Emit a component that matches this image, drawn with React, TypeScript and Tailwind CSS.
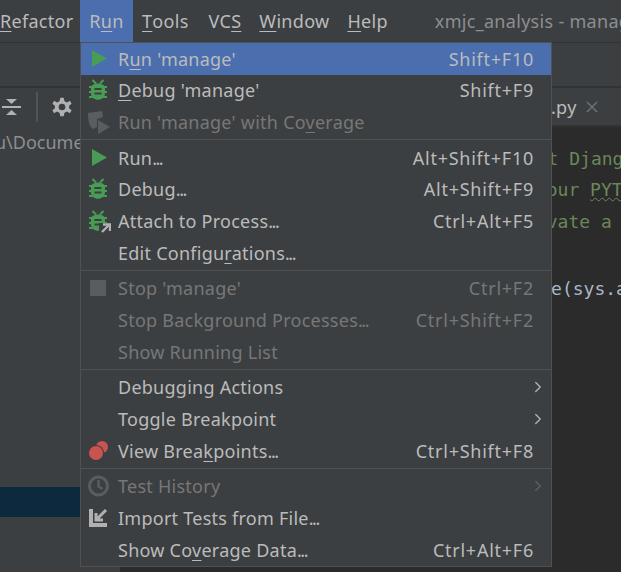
import React from 'react';
import { ChevronRight } from 'lucide-react';

const font = "font-['Noto_Sans','Open_Sans',sans-serif]";
const mono = "font-['DejaVu_Sans_Mono',monospace]";

const RunIcon = () => (
  <svg width="22" height="22" viewBox="0 0 22 22">
    <path d="M5 2 L20 10.5 L5 19 Z" fill="#499c54" />
  </svg>
);

const BugIcon = ({ attach }: { attach?: boolean }) => (
  <svg width="24" height="24" viewBox="0 0 24 24">
    <path d="M5.5 2 L9 5.5 M16.5 2 L13 5.5" stroke="#499c54" strokeWidth="2" />
    <path d="M2 9 H20 M2 14 H20 M2 19 H20" stroke="#499c54" strokeWidth="2.2" />
    <path d="M4 10 C4 4 18 4 18 10 V15 C18 24 4 24 4 15 Z" fill="#499c54" />
    <path d="M7.5 11 H14.5 M7.5 15.5 H14.5" stroke="#3c3f41" strokeWidth="2" />
    {attach && (
      <>
        <path d="M12 14 H24 V24 H12 Z" fill="#3c3f41" />
        <path d="M15 23 L22 16 M16 15.5 H23 V22" stroke="#afb1b3" strokeWidth="2.4" fill="none" />
      </>
    )}
  </svg>
);

const CoverageIcon = () => (
  <svg width="24" height="24" viewBox="0 0 24 24">
    <path d="M1 3 L15 1 L16 7 L10 9 V17 L6 19 C3 17 1 12 1 3 Z" fill="#5a5d5f" />
    <path d="M11 10 L23 17 L11 24 Z" fill="#5a5d5f" />
  </svg>
);

const StopIcon = () => <div className="ml-[3px] w-[16px] h-[16px] bg-[#5a5d5f] rounded-[1px]" />;

const BreakpointsIcon = () => (
  <svg width="22" height="22" viewBox="0 0 22 22">
    <circle cx="15" cy="7" r="6" fill="#c75450" />
    <circle cx="9" cy="13" r="8" fill="#3c3f41" />
    <circle cx="9" cy="13" r="7" fill="#c75450" />
  </svg>
);

const HistoryIcon = () => (
  <svg width="24" height="24" viewBox="0 0 24 24" fill="none" stroke="#5a5d5f">
    <circle cx="11.5" cy="12" r="9" strokeWidth="3" />
    <path d="M11.5 6 V12.5 L15.5 15" strokeWidth="2.4" />
  </svg>
);

const ImportIcon = () => (
  <svg width="22" height="22" viewBox="0 0 22 22" fill="none" stroke="#afb1b3">
    <path d="M4 2 V18 H20" strokeWidth="4" />
    <path d="M9 13 L19 3 M9 6 V13 H16" strokeWidth="3" />
  </svg>
);

type Row = {
  label: React.ReactNode;
  keys?: string;
  icon?: React.ReactNode;
  disabled?: boolean;
  active?: boolean;
  sub?: boolean;
};

const U = ({ children }: { children: string }) => (
  <span className="underline underline-offset-[3px] decoration-1">{children}</span>
);

const Dots = () => <span className="tracking-[-1.5px]">...</span>;

const groups: Row[][] = [
  [
    { label: <>R<U>u</U>n 'manage'</>, keys: 'Shift+F10', icon: <RunIcon />, active: true },
    { label: <><U>D</U>ebug 'manage'</>, keys: 'Shift+F9', icon: <BugIcon /> },
    { label: <>Run 'manage' with Co<U>v</U>erage</>, icon: <CoverageIcon />, disabled: true },
  ],
  [
    { label: <>Run<Dots /></>, keys: 'Alt+Shift+F10', icon: <RunIcon /> },
    { label: <>Debug<Dots /></>, keys: 'Alt+Shift+F9', icon: <BugIcon /> },
    { label: <>Attach to Process<Dots /></>, keys: 'Ctrl+Alt+F5', icon: <BugIcon attach /> },
    { label: <>Edit Configu<U>r</U>ations<Dots /></> },
  ],
  [
    { label: "Stop 'manage'", keys: 'Ctrl+F2', icon: <StopIcon />, disabled: true },
    { label: <>Stop Background Processes<Dots /></>, keys: 'Ctrl+Shift+F2', disabled: true },
    { label: 'Show Running List', disabled: true },
  ],
  [
    { label: 'Debugging Actions', sub: true },
    { label: 'Toggle Breakpoint', sub: true },
    { label: <>View Brea<U>k</U>points<Dots /></>, keys: 'Ctrl+Shift+F8', icon: <BreakpointsIcon /> },
  ],
  [
    { label: 'Test History', icon: <HistoryIcon />, disabled: true, sub: true },
    { label: <>Import Tests from File<Dots /></>, icon: <ImportIcon /> },
    { label: <>Show Co<U>v</U>erage Data<Dots /></>, keys: 'Ctrl+Alt+F6' },
  ],
];

const MenuRow = ({ row }: { row: Row }) => (
  <div
    className={`h-[31.67px] flex items-center pr-[18px] ${row.active ? 'bg-[#4b6eaf]' : ''} ${
      row.disabled ? 'text-[#777777]' : 'text-[#bbbbbb]'
    }`}
  >
    <div className="w-[37px] pl-[6px] flex items-center shrink-0">{row.icon}</div>
    <span className="flex-1 whitespace-nowrap tracking-[0.25px]">{row.label}</span>
    {row.keys && <span className="tracking-[0.75px] -mr-[1px]">{row.keys}</span>}
    {row.sub && (
      <ChevronRight
        size={18}
        strokeWidth={1.8}
        className={`-mr-[14px] ${row.disabled ? 'text-[#5f6163]' : 'text-[#afb1b3]'}`}
      />
    )}
  </div>
);

const TopMenu = ({ label, className = '' }: { label: React.ReactNode; className?: string }) => (
  <div className={`h-full shrink-0 flex items-center justify-center px-[9px] ${className}`}>{label}</div>
);

export default function App() {
  return (
    <div className={`relative w-[621px] h-[572px] overflow-hidden bg-[#3c3f41] text-[18px] leading-none text-[#bbbbbb] ${font}`}>
      <div className="h-[43px] flex items-center border-b border-[#323232] tracking-[0.3px] whitespace-nowrap overflow-hidden">
        <div className="w-[80px] shrink-0 h-full flex items-center"><U>R</U>efactor</div>
        <TopMenu className="w-[53px] bg-[#4b6eaf]" label={<>R<U>u</U>n</>} />
        <TopMenu label={<><U>T</U>ools</>} />
        <TopMenu className="ml-[2px]" label={<>VC<U>S</U></>} />
        <TopMenu label={<><U>W</U>indow</>} />
        <TopMenu label={<><U>H</U>elp</>} />
        <div className="ml-[38px] shrink-0 text-[#8c8e90]">xmjc_analysis - manage.py</div>
      </div>

      <div className="h-[45px] border-b-2 border-[#323232]" />

      <div className="flex h-[484px]">
        <div className="w-[120px] shrink-0 flex flex-col overflow-hidden">
          <div className="h-[38px] shrink-0 flex items-center pl-[2px]">
            <svg width="20" height="22" viewBox="0 0 20 22">
              <path d="M0 11 H19" stroke="#afb1b3" strokeWidth="2" />
              <path d="M4 3 H15 L9.5 8 Z M4 19 H15 L9.5 14 Z" fill="#afb1b3" />
            </svg>
            <div className="ml-[14px] w-[2px] h-[30px] bg-[#515355]" />
            <svg width="20" height="20" viewBox="0 0 24 24" fill="#afb1b3" className="ml-[14px]">
              <path d="M10 1 H14 L15 5 L18 6.5 L21.5 4.5 L23.5 8 L20.5 10.5 V13.5 L23.5 16 L21.5 19.5 L18 17.5 L15 19 L14 23 H10 L9 19 L6 17.5 L2.5 19.5 L0.5 16 L3.5 13.5 V10.5 L0.5 8 L2.5 4.5 L6 6.5 L9 5 Z M12 8 A4 4 0 1 0 12 16 A4 4 0 1 0 12 8 Z" fillRule="evenodd" />
            </svg>
          </div>
          <div className="h-[32px] mb-[2px] shrink-0 flex items-center whitespace-nowrap text-[#8c8e90] -ml-[5px]">u\Documents</div>
          <div className="h-[327px] shrink-0" />
          <div className="h-[30px] shrink-0 bg-[#0d293e]" />
        </div>

        <div className="flex-1 min-w-0 flex flex-col overflow-hidden">
          <div className="h-[39px] shrink-0 flex items-center pl-[431px] gap-[8px] border-b-2 border-[#323232]">
            <span className="tracking-[0.3px]">.py</span>
            <svg width="14" height="14" viewBox="0 0 14 14">
              <path d="M2 2 L12 12 M12 2 L2 12" stroke="#6e7072" strokeWidth="1.5" />
            </svg>
          </div>
          <div className={`flex-1 bg-[#2b2b2b] pt-[16px] text-[18px] whitespace-nowrap text-[#6a8759] ${mono}`}>
            <div className="h-[31.5px] flex items-center pl-[265px]">"Couldn't import Django. Are you sure</div>
            <div className="h-[31.5px] flex items-center pl-[275px]">
              available on your&nbsp;<span className="underline decoration-wavy decoration-1 decoration-[#6a8759]">PYTHONPATH</span>
            </div>
            <div className="h-[31.5px] flex items-center pl-[275px]">forget to activate a virtual</div>
            <div className="h-[31.5px] mt-[36px] flex items-center pl-[171px] text-[#a9b7c6]">execute_from_command_line(sys.argv)</div>
          </div>
        </div>
      </div>

      <div className="absolute left-[80px] top-[42px] w-[472px] h-[525px] bg-[#3c3f41] border border-[#515151]">
        {groups.map((rows, i) => (
          <div key={i}>
            {i > 0 && (
              <div className="h-[4px] flex items-center">
                <div className="h-[1px] w-full bg-[#515151]" />
              </div>
            )}
            {rows.map((row, j) => (
              <MenuRow key={j} row={row} />
            ))}
          </div>
        ))}
      </div>
    </div>
  );
}
